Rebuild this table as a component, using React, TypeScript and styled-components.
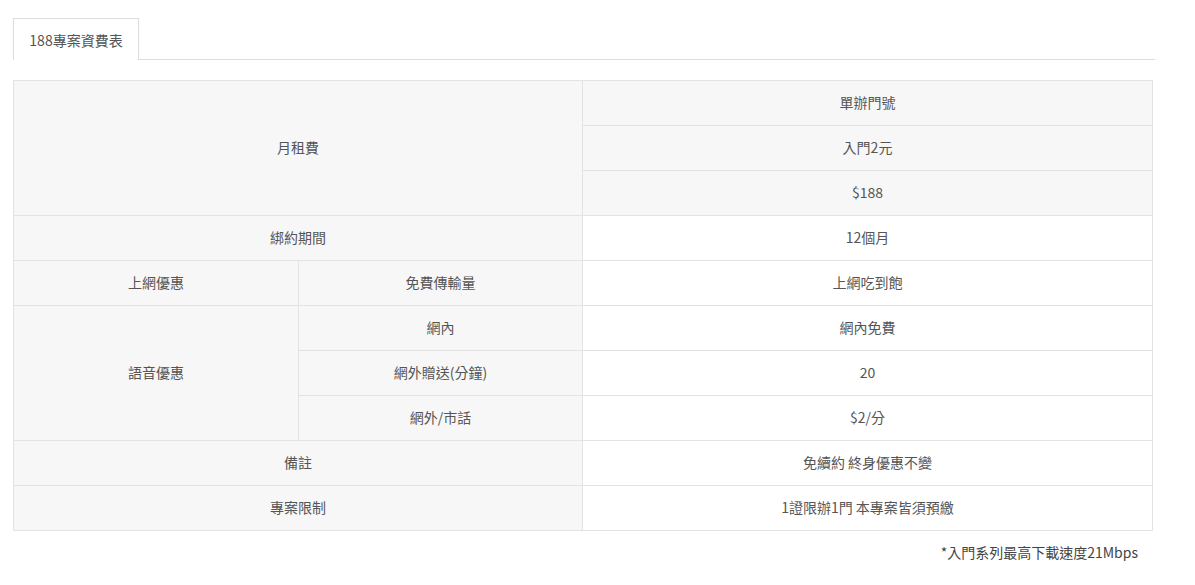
import React from "react";
import styled, { createGlobalStyle } from "styled-components";

const Global = createGlobalStyle`
  html, body { margin: 0; padding: 0; background: #fff; }
  body {
    font-family: "Noto Sans CJK TC", "Noto Sans", "Liberation Sans", sans-serif;
    color: #555;
  }
`;

const Page = styled.div`
  padding: 18px 0 0 13px;
  width: 1142px;
`;

const TabBar = styled.div`
  display: flex;
  height: 42px;
`;

const Tab = styled.div`
  width: 124px;
  border: 1px solid #ddd;
  border-bottom: none;
  display: flex;
  align-items: center;
  justify-content: center;
  font-size: 14px;
  line-height: 1;
  color: #555;
  background: #fff;
`;

const TabRest = styled.div`
  flex: 1;
  border-bottom: 1px solid #ddd;
`;

const PriceTable = styled.table`
  margin-top: 20px;
  width: 1139px;
  border-collapse: collapse;
  table-layout: fixed;
  font-size: 14px;
  line-height: 1;
  color: #555;
`;

const Cell = styled.td<{ $shaded?: boolean }>`
  height: 42px;
  padding: 0 0 2px;
  border: 1px solid #e3e3e3;
  background: ${(p) => (p.$shaded ? "#f7f7f7" : "#fff")};
  text-align: center;
  vertical-align: middle;
  font-weight: 400;
`;

const Note = styled.div`
  width: 1125px;
  text-align: right;
  font-size: 14px;
  line-height: 18px;
  margin-top: 12px;
  color: #444;
`;

export default function App() {
  return (
    <>
      <Global />
      <Page>
        <TabBar>
          <Tab>188專案資費表</Tab>
          <TabRest />
        </TabBar>
        <PriceTable>
          <colgroup>
            <col style={{ width: 285 }} />
            <col style={{ width: 284 }} />
            <col style={{ width: 570 }} />
          </colgroup>
          <tbody>
            <tr>
              <Cell as="th" $shaded colSpan={2} rowSpan={3}>月租費</Cell>
              <Cell $shaded>單辦門號</Cell>
            </tr>
            <tr>
              <Cell $shaded>入門2元</Cell>
            </tr>
            <tr>
              <Cell $shaded>$188</Cell>
            </tr>
            <tr>
              <Cell as="th" $shaded colSpan={2}>綁約期間</Cell>
              <Cell>12個月</Cell>
            </tr>
            <tr>
              <Cell as="th" $shaded>上網優惠</Cell>
              <Cell as="th" $shaded>免費傳輸量</Cell>
              <Cell>上網吃到飽</Cell>
            </tr>
            <tr>
              <Cell as="th" $shaded rowSpan={3}>語音優惠</Cell>
              <Cell as="th" $shaded>網內</Cell>
              <Cell>網內免費</Cell>
            </tr>
            <tr>
              <Cell as="th" $shaded>網外贈送(分鐘)</Cell>
              <Cell>20</Cell>
            </tr>
            <tr>
              <Cell as="th" $shaded>網外/市話</Cell>
              <Cell>$2/分</Cell>
            </tr>
            <tr>
              <Cell as="th" $shaded colSpan={2}>備註</Cell>
              <Cell>免續約 終身優惠不變</Cell>
            </tr>
            <tr>
              <Cell as="th" $shaded colSpan={2}>專案限制</Cell>
              <Cell>1證限辦1門 本專案皆須預繳</Cell>
            </tr>
          </tbody>
        </PriceTable>
        <Note>*入門系列最高下載速度21Mbps</Note>
      </Page>
    </>
  );
}
